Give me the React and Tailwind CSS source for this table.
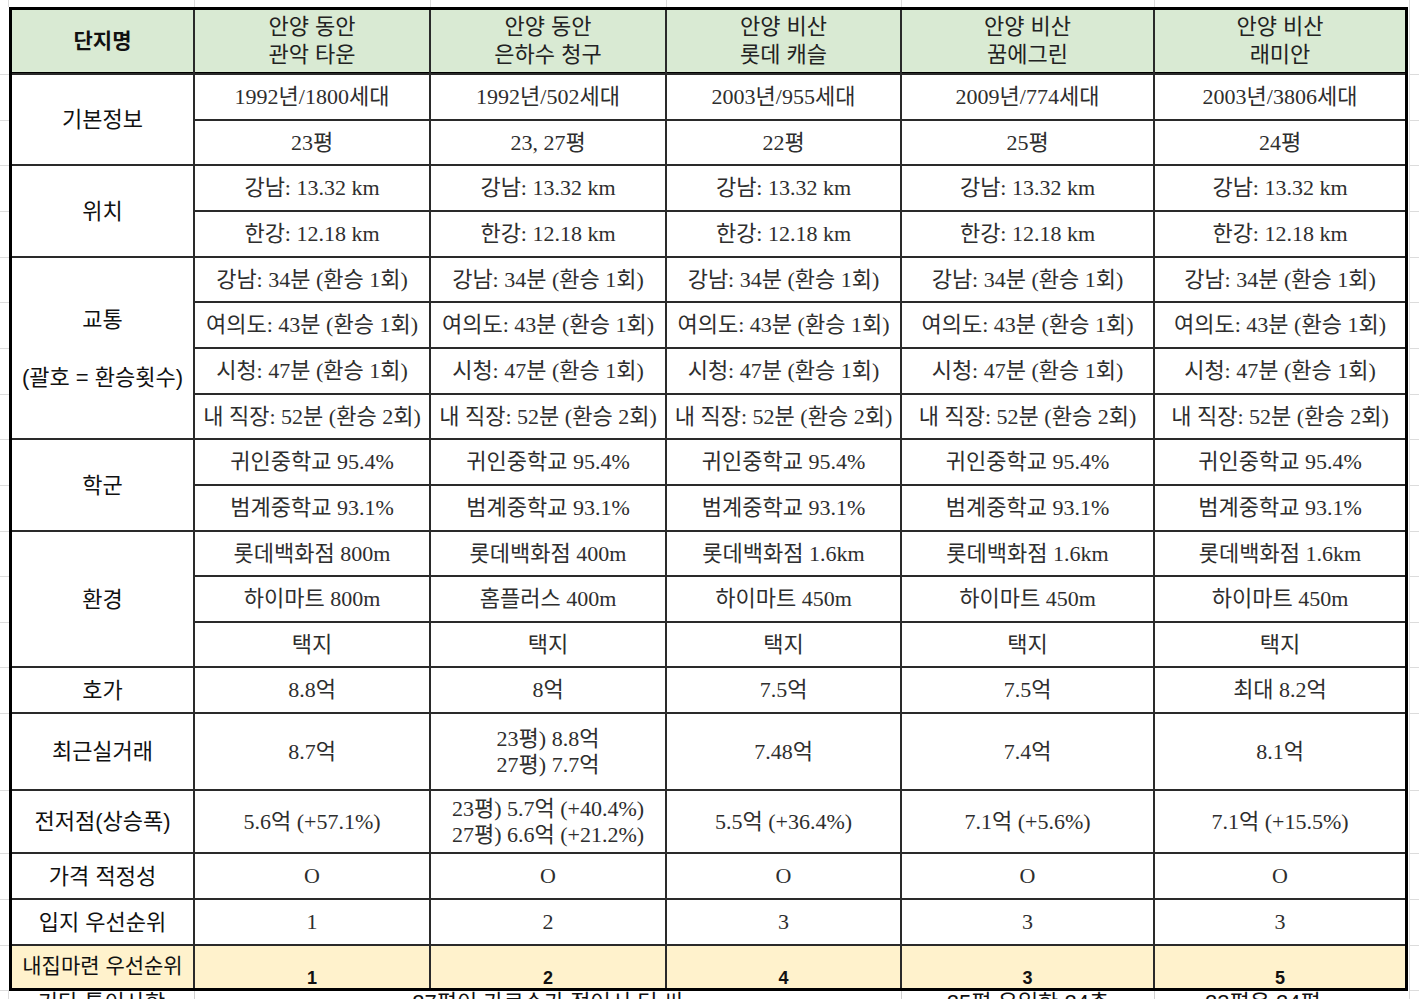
import React from "react";

const serif = { fontFamily: '"Liberation Serif", "Noto Sans CJK KR", serif' };

const names = [
  ["안양 동안", "관악 타운"],
  ["안양 동안", "은하수 청구"],
  ["안양 비산", "롯데 캐슬"],
  ["안양 비산", "꿈에그린"],
  ["안양 비산", "래미안"],
];

const groups = [
  {
    label: ["기본정보"],
    span: "row-span-2",
    rows: [
      ["1992년/1800세대", "1992년/502세대", "2003년/955세대", "2009년/774세대", "2003년/3806세대"],
      ["23평", "23, 27평", "22평", "25평", "24평"],
    ],
  },
  {
    label: ["위치"],
    span: "row-span-2",
    rows: [
      Array(5).fill("강남: 13.32 km"),
      Array(5).fill("한강: 12.18 km"),
    ],
  },
  {
    label: ["교통", "\u00a0", "(괄호 = 환승횟수)"],
    span: "row-span-4",
    rows: [
      Array(5).fill("강남: 34분 (환승 1회)"),
      Array(5).fill("여의도: 43분 (환승 1회)"),
      Array(5).fill("시청: 47분 (환승 1회)"),
      Array(5).fill("내 직장: 52분 (환승 2회)"),
    ],
  },
  {
    label: ["학군"],
    span: "row-span-2",
    rows: [
      Array(5).fill("귀인중학교 95.4%"),
      Array(5).fill("범계중학교 93.1%"),
    ],
  },
  {
    label: ["환경"],
    span: "row-span-3",
    rows: [
      ["롯데백화점 800m", "롯데백화점 400m", "롯데백화점 1.6km", "롯데백화점 1.6km", "롯데백화점 1.6km"],
      ["하이마트 800m", "홈플러스 400m", "하이마트 450m", "하이마트 450m", "하이마트 450m"],
      Array(5).fill("택지"),
    ],
  },
  {
    label: ["호가"],
    span: "",
    rows: [["8.8억", "8억", "7.5억", "7.5억", "최대 8.2억"]],
  },
  {
    label: ["최근실거래"],
    span: "",
    rows: [["8.7억", ["23평) 8.8억", "27평) 7.7억"], "7.48억", "7.4억", "8.1억"]],
  },
  {
    label: ["전저점(상승폭)"],
    span: "",
    rows: [
      [
        "5.6억 (+57.1%)",
        ["23평) 5.7억 (+40.4%)", "27평) 6.6억 (+21.2%)"],
        "5.5억 (+36.4%)",
        "7.1억 (+5.6%)",
        "7.1억 (+15.5%)",
      ],
    ],
  },
  {
    label: ["가격 적정성"],
    span: "",
    rows: [Array(5).fill("O")],
  },
  {
    label: ["입지 우선순위"],
    span: "",
    rows: [["1", "2", "3", "3", "3"]],
  },
];

const gutterHeights = [
  "h-[68px]", "h-[46px]", "h-[45px]", "h-[46px]", "h-[46px]", "h-[45px]", "h-[46px]",
  "h-[46px]", "h-[45px]", "h-[46px]", "h-[46px]", "h-[45px]", "h-[46px]", "h-[45px]",
  "h-[46px]", "h-[77px]", "h-[63px]", "h-[46px]", "h-[46px]", "h-[45px]",
];

function Gutter({ className }) {
  return (
    <div className={"flex flex-col " + className}>
      {gutterHeights.map((h, i) => (
        <div key={i} className={h + " shrink-0 border-b border-[#dcdcdc]"} />
      ))}
    </div>
  );
}

function Value({ v }) {
  if (Array.isArray(v)) {
    return (
      <div className="bg-white flex flex-col items-center justify-center text-center text-[22px] leading-[26px] text-[#2e2e2e]" style={serif}>
        {v.map((l, i) => (
          <div key={i} className="whitespace-nowrap">{l}</div>
        ))}
      </div>
    );
  }
  return (
    <div className="bg-white flex items-center justify-center text-center text-[22px] leading-[26px] text-[#2e2e2e] whitespace-nowrap" style={serif}>
      {v}
    </div>
  );
}

export default function App() {
  const sans = { fontFamily: '"Liberation Sans", "Noto Sans CJK KR", sans-serif' };
  return (
    <div className="w-[1419px] h-[999px] overflow-hidden bg-white" style={sans}>
      {/* top strip with sheet grid lines */}
      <div className="flex h-[7px]">
        <div className="w-[9px] shrink-0 border-r border-[#dcdcdc]" />
        <div className="w-[186px] shrink-0 border-r border-[#dcdcdc]" />
        <div className="w-[236px] shrink-0 border-r border-[#dcdcdc]" />
        <div className="w-[236px] shrink-0 border-r border-[#dcdcdc]" />
        <div className="w-[235px] shrink-0 border-r border-[#dcdcdc]" />
        <div className="w-[253px] shrink-0 border-r border-[#dcdcdc]" />
        <div className="w-[255px] shrink-0 border-r border-[#dcdcdc]" />
        <div className="flex-1" />
      </div>

      <div className="flex">
        <Gutter className="w-[9px] shrink-0 -mt-[7px] pt-[7px]" />
        <div className="grid shrink-0 border-[3px] border-black bg-[#2a2a2a] gap-[2px] grid-cols-[181px_234px_234px_233px_251px_250px] grid-rows-[63px_44px_43px_44px_44px_43px_44px_44px_43px_44px_44px_43px_44px_43px_44px_75px_61px_44px_44px_42px]">
          {/* header */}
          <div className="bg-[#d9ead3] border-b border-black flex items-center justify-center text-[21px] font-bold text-[#111]">
            단지명
          </div>
          {names.map((n, i) => (
            <div
              key={i}
              className="bg-[#d9ead3] border-b border-black flex flex-col items-center justify-center text-[22px] leading-[28px] text-[#222]"
            >
              <div>{n[0]}</div>
              <div>{n[1]}</div>
            </div>
          ))}

          {groups.map((g, gi) => (
            <React.Fragment key={gi}>
              {g.rows.map((row, ri) => (
                <React.Fragment key={ri}>
                  {ri === 0 && (
                    <div
                      className={
                        "bg-white flex flex-col items-center justify-center text-center text-[22px] leading-[29px] text-[#111] whitespace-nowrap " +
                        g.span
                      }
                    >
                      {g.label.map((l, li) => (
                        <div key={li}>{l}</div>
                      ))}
                    </div>
                  )}
                  {row.map((v, vi) => (
                    <Value key={vi} v={v} />
                  ))}
                </React.Fragment>
              ))}
            </React.Fragment>
          ))}

          {/* final yellow row */}
          <div className="bg-[#fff2cc] flex items-center justify-center text-[21px] text-[#111] whitespace-nowrap pb-[2px]">
            내집마련 우선순위
          </div>
          {["1", "2", "4", "3", "5"].map((n, i) => (
            <div
              key={i}
              className="bg-[#fff2cc] flex items-end justify-center text-[18px] leading-[20px] font-bold text-[#111]"
            >
              {n}
            </div>
          ))}
        </div>
        <Gutter className="flex-1 ml-[1px] border-l border-[#dcdcdc] -mt-[7px] pt-[7px]" />
      </div>

      {/* next sheet row, cut off by the window */}
      <div className="flex h-[40px] text-[22px] leading-[24px] text-[#111]">
        <div className="w-[9px] shrink-0 border-r border-[#dcdcdc]" />
        <div className="w-[186px] shrink-0 border-r border-[#cfcfcf] flex justify-center">기타 특이사항</div>
        <div className="w-[707px] shrink-0 border-r border-[#cfcfcf] flex justify-center">27평이 가로수가 적어서 더 싸</div>
        <div className="w-[253px] shrink-0 border-r border-[#cfcfcf] flex justify-center">25평 유일한 24층</div>
        <div className="w-[255px] shrink-0 border-r border-[#dcdcdc] flex justify-start pl-[50px]">23평은 24평</div>
        <div className="flex-1" />
      </div>
    </div>
  );
}
